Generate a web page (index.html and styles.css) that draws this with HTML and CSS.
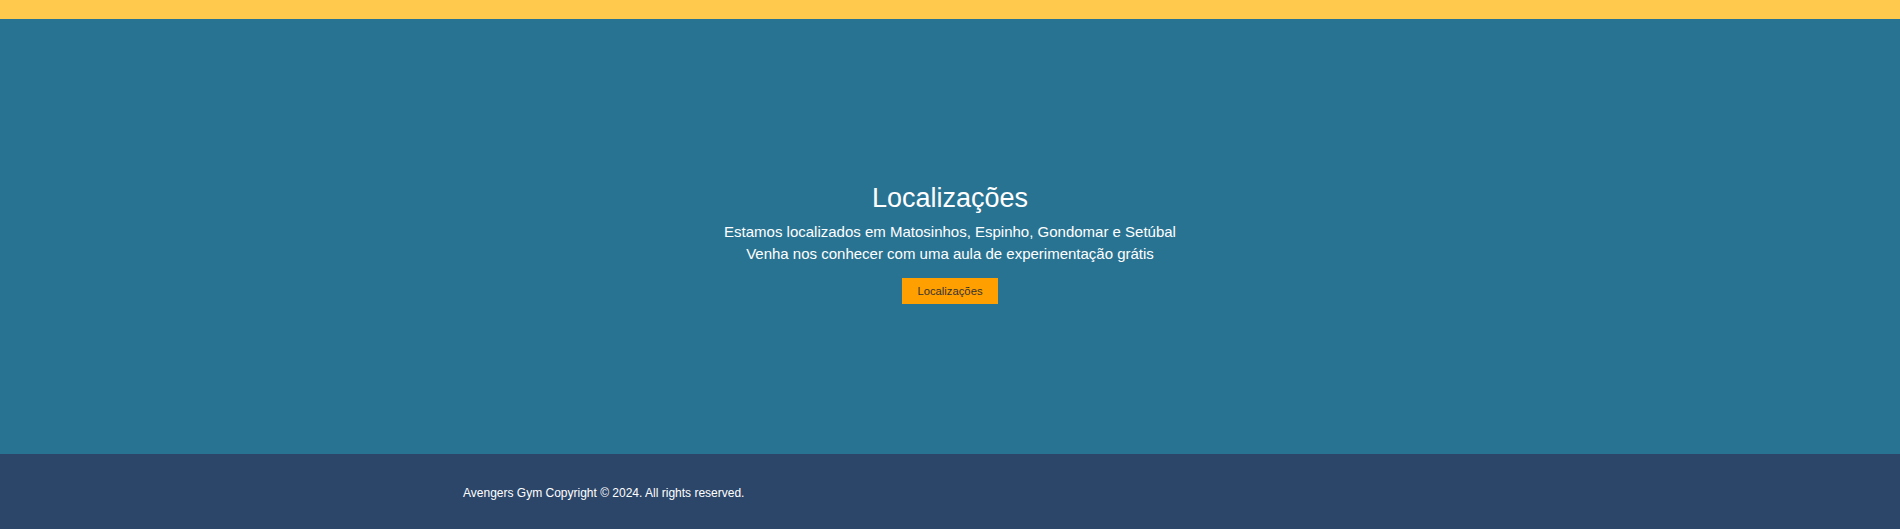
FILE: index.html
```html
<!DOCTYPE html>
<html lang="pt">
<head>
<meta charset="utf-8">
<title>Avengers Gym - Localizações</title>
<link rel="stylesheet" href="styles.css">
</head>
<body>
<div class="topbar"></div>
<section class="hero">
  <div class="hero-content">
    <h1 class="hero-title">Localizações</h1>
    <p class="hero-text">Estamos localizados em Matosinhos, Espinho, Gondomar e Setúbal<br>Venha nos conhecer com uma aula de experimentação grátis</p>
    <a class="hero-button" href="#">Localizações</a>
  </div>
</section>
<footer class="footer">
  <div class="footer-inner">
    <p class="copyright">Avengers Gym Copyright © 2024. All rights reserved.</p>
  </div>
</footer>
</body>
</html>
```

FILE: styles.css
```css
* { box-sizing: border-box; }
html, body { margin: 0; padding: 0; }
body {
  font-family: "Liberation Sans", Arial, sans-serif;
  font-size: 15px;
  color: #fff;
  background: #2c4669;
}
.topbar {
  height: 19px;
  background: #ffc94d;
}
.hero {
  height: 435px;
  background: #297392;
  display: flex;
  align-items: center;
  justify-content: center;
  padding-top: 14px;
}
.hero-content {
  display: flex;
  flex-direction: column;
  align-items: center;
  text-align: center;
}
.hero-title {
  margin: 0;
  font-size: 27px;
  font-weight: normal;
  line-height: 31px;
}
.hero-text {
  margin: 7px 0 0;
  font-size: 15px;
  line-height: 22px;
}
.hero-button {
  margin-top: 13px;
  display: inline-block;
  width: 96px;
  height: 26px;
  line-height: 26px;
  background: #ff9f00;
  color: #333;
  font-size: 11.25px;
  text-decoration: none;
  text-align: center;
}
.footer {
  height: 75px;
  background: #2c4669;
  display: flex;
  align-items: center;
}
.footer-inner {
  width: 974px;
  margin: 0 auto;
}
.copyright {
  margin: 0;
  font-size: 12px;
  padding-top: 3px;
}
```
